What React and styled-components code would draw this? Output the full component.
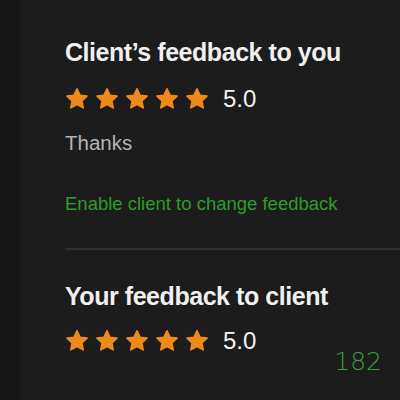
import React from "react"
import styled, { createGlobalStyle } from "styled-components"

const GlobalStyle = createGlobalStyle`
  html, body {
    margin: 0;
    padding: 0;
    background: #1c1c1c;
  }
  body {
    font-family: "Liberation Sans", Arial, sans-serif;
    -webkit-font-smoothing: antialiased;
  }
`

const Page = styled.div`
  position: relative;
  display: flex;
  width: 400px;
  height: 400px;
  overflow: hidden;
  background: #1c1c1c;
`

const Gutter = styled.div`
  width: 22px;
  flex-shrink: 0;
  background: linear-gradient(to right, #171717 0, #171717 18px, #1c1c1c 22px);
`

const Content = styled.div`
  flex: 1;
  padding: 37px 0 0 43px;
  display: flex;
  flex-direction: column;
`

const Section = styled.section`
  display: flex;
  flex-direction: column;
`

const Title = styled.h2`
  margin: ${p => p.$top || 0}px 0 0;
  font-size: 25px;
  font-weight: 700;
  color: #f0f0f0;
  line-height: 30px;
  letter-spacing: -0.45px;
`

const RatingRow = styled.div`
  display: flex;
  align-items: center;
  gap: 8px;
  margin-top: ${p => p.$top}px;
`

const Stars = styled.div`
  display: flex;
  gap: 6px;
`

const Score = styled.span`
  margin-left: 6px;
  font-size: 24px;
  color: #f2f2f2;
  line-height: 24px;
`

const Comment = styled.p`
  margin: 20px 0 0;
  font-size: 20.5px;
  color: #b4b4b4;
  line-height: 24px;
`

const ActionLink = styled.a`
  margin-top: 38px;
  font-size: 18.5px;
  color: #2e9c29;
  line-height: 22px;
  cursor: pointer;
`

const Divider = styled.hr`
  margin: 33px 0 0;
  border: 0;
  height: 2px;
  background: #303030;
`

const Counter = styled.span`
  position: absolute;
  right: 18px;
  bottom: 24px;
  font-family: "DejaVu Sans", sans-serif;
  font-weight: 300;
  font-size: 25px;
  color: #3c9a3c;
`

const Star = () => (
  <svg width="24" height="24" viewBox="0 0 24 24">
    <path
      d="M12 1.8l3.05 6.4 7 .85-5.15 4.85 1.32 6.95L12 17.45l-6.22 3.4 1.32-6.95L1.95 9.05l7-.85z"
      fill="#ee8a1a"
      stroke="#ee8a1a"
      strokeWidth="1.6"
      strokeLinejoin="round"
    />
  </svg>
)

const Rating = ({ value, top }) => (
  <RatingRow $top={top}>
    <Stars>
      {[0, 1, 2, 3, 4].map(i => <Star key={i} />)}
    </Stars>
    <Score>{value.toFixed(1)}</Score>
  </RatingRow>
)

export default function App() {
  return (
    <>
      <GlobalStyle />
      <Page>
        <Gutter />
        <Content>
          <Section>
            <Title>Client’s feedback to you</Title>
            <Rating value={5} top={20} />
            <Comment>Thanks</Comment>
            <ActionLink>Enable client to change feedback</ActionLink>
          </Section>
          <Divider />
          <Section>
            <Title $top={31}>Your feedback to client</Title>
            <Rating value={5} top={18} />
          </Section>
        </Content>
        <Counter>182</Counter>
      </Page>
    </>
  )
}
